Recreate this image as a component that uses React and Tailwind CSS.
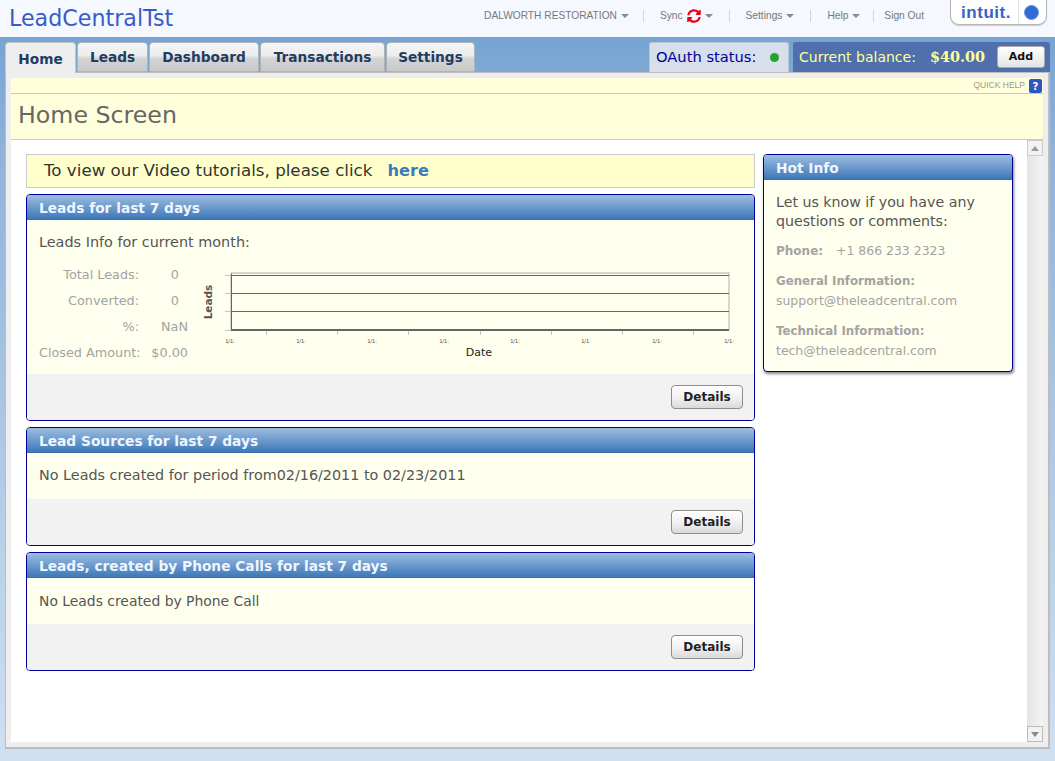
import { FaSyncAlt } from 'react-icons/fa';

const Caret = () => (
  <span className="ml-1 inline-block w-0 h-0 border-x-[4px] border-x-transparent border-t-[4px] border-t-[#8a8a8a] align-middle" />
);

const Tab = ({ label, active, className }) => (
  <div
    className={`${className} ${
      active
        ? 'h-[31px] -mb-px z-10 flex items-center justify-center pt-[2px] rounded-t-[4px] border border-b-0 border-[#c4c4c4] bg-[#eeeeee] text-[13.7px] font-bold text-[#1f3c63]'
        : 'h-[30px] flex items-center justify-center rounded-t-[4px] border border-[#a9b4bf] bg-[linear-gradient(#f5f5f5,#ececec_45%,#d4d4d4_55%,#c9c9c9)] text-[13.7px] font-bold text-[#1f3c63]'
    }`}
  >
    {label}
  </div>
);

const Card = ({ title, footer, children, className }) => (
  <div className={`border border-[#000099] rounded-[4px] overflow-hidden bg-[#ffffee] ${className || ''}`}>
    <div className="h-[25px] px-3 pt-[2px] flex items-center bg-[linear-gradient(#9dbde0,#3d78b9)] text-[#eef5ff] text-[13.75px] font-bold border-b border-[#3a6ea5]">
      {title}
    </div>
    {children}
    {footer && (
      <div className="h-[46px] bg-[#f2f2f2] flex items-center justify-end pr-[11px]">
        <button className="w-[72px] h-[24px] rounded-[4px] border border-[#8e8e8e] bg-[linear-gradient(#ffffff,#f0f0f0_55%,#d9d9d9)] text-[12px] font-bold text-[#222222]">
          Details
        </button>
      </div>
    )}
  </div>
);

const Chart = () => {
  const ticks = [230, 301, 372, 444, 515, 586, 657, 729];
  return (
    <svg width="540" height="100" viewBox="195 262 540 100" className="block">
      <text x="212" y="302" transform="rotate(-90 212 302)" textAnchor="middle" fontSize="10.5" fontWeight="bold" fill="#555" fontFamily="DejaVu Sans">Leads</text>
      <rect x="231" y="273" width="498" height="57" fill="none" stroke="#b0b0b0" />
      {[275, 293, 311].map((y) => (
        <line key={y} x1="231" x2="729" y1={y + 0.5} y2={y + 0.5} stroke="#666" />
      ))}
      <line x1="231.5" x2="231.5" y1="274" y2="330" stroke="#666" />
      <line x1="231" x2="729" y1="330" y2="330" stroke="#666" strokeWidth="2" />
      {[275, 293, 311, 330].map((y) => (
        <line key={y} x1="225" x2="231" y1={y + 0.5} y2={y + 0.5} stroke="#b7c7d8" />
      ))}
      {[266, 337, 408, 480, 551, 622, 693].map((x) => (
        <line key={x} x1={x + 0.5} x2={x + 0.5} y1="331" y2="335" stroke="#b7c7d8" />
      ))}
      {ticks.map((x) => (
        <text key={x} x={x} y="343" textAnchor="middle" fontSize="5" fill="#444" fontFamily="DejaVu Sans">1/1:</text>
      ))}
      <text x="479" y="356" textAnchor="middle" fontSize="11" fill="#222" fontFamily="DejaVu Sans">Date</text>
    </svg>
  );
};

const StatRow = ({ label, value, valueClass }) => (
  <div className="flex h-[26px] items-center text-[12.8px] text-[#a3a3a3] whitespace-nowrap">
    <div className="w-[100px] text-right">{label}</div>
    <div className={`w-[49px] text-right ${valueClass || ''}`}>{value}</div>
  </div>
);

export default function App() {
  return (
    <div className="h-screen overflow-hidden flex flex-col bg-[linear-gradient(#6f9fd0,#8fb3da_20%,#cfe0f1)] font-['DejaVu_Sans',sans-serif]">
      <div className="h-[37px] shrink-0 bg-[#f5f8ff] flex items-start justify-between">
        <div className="pl-[9px] pt-[3px] text-[22.2px] leading-[30px] text-[#3a5bc7]">LeadCentralTst</div>
        <div className="flex items-start font-['Liberation_Sans',sans-serif] text-[10.2px] text-[#777777]">
          <div className="flex items-center h-[12px] mt-[10px] pr-[14px]">DALWORTH RESTORATION<Caret /></div>
          <div className="flex items-center h-[12px] mt-[10px] pl-4 pr-[16px] border-l border-[#d5d5d5]">
            Sync <FaSyncAlt className="ml-1 text-[#ee0011] text-[14px]" /><Caret />
          </div>
          <div className="flex items-center h-[12px] mt-[10px] pl-4 pr-[16px] border-l border-[#d5d5d5]">Settings<Caret /></div>
          <div className="flex items-center h-[12px] mt-[10px] pl-4 pr-[13px] border-l border-[#d5d5d5]">Help<Caret /></div>
          <div className="flex items-center h-[12px] mt-[10px] pl-[10px] pr-[26px] border-l border-[#d5d5d5]">Sign Out</div>
          <div className="mr-[8px] w-[97px] h-[26px] -mt-px flex rounded-b-[9px] border border-[#b5b5b5] bg-white shadow-[0_1px_1px_#cccccc]">
            <div className="w-[67px] pt-[1px] pl-[3px] flex items-center justify-center font-['Liberation_Sans',sans-serif] text-[17px] font-bold tracking-[0.5px] text-[#3763c4]">intuit.</div>
            <div className="flex-1 border-l border-[#e2e2e2] flex items-center justify-center pr-[2px]">
              <span className="w-[15px] h-[15px] rounded-full bg-[#2f6ad6] border border-[#6d94dc]" />
            </div>
          </div>
        </div>
      </div>

      <div className="h-[35px] shrink-0 px-[5px] pt-[5px] flex justify-between items-start">
        <div className="flex gap-px">
          <Tab label="Home" active className="w-[71px]" />
          <Tab label="Leads" className="w-[71px]" />
          <Tab label="Dashboard" className="w-[110px]" />
          <Tab label="Transactions" className="w-[125px]" />
          <Tab label="Settings" className="w-[89px]" />
        </div>
        <div className="flex gap-1">
          <div className="w-[140px] h-[30px] px-[6px] flex items-center justify-between pr-[9px] rounded-t-[3px] border border-b-0 border-[#b9c6d6] bg-[#d6dfea] text-[14.7px] text-[#000099]">
            OAuth status:
            <span className="w-[9px] h-[9px] rounded-full bg-[#21a52a]" />
          </div>
          <div className="w-[257px] h-[30px] pl-[6px] pr-[5px] flex items-center rounded-t-[3px] bg-[#5070ad] text-[14px] text-[#ffff99]">
            <span>Current balance:</span>
            <span className="ml-[14px] font-['DejaVu_Serif',serif] font-bold text-[14.4px]">$40.00</span>
            <button className="ml-auto w-[48px] h-[22px] rounded-[3px] border border-[#aaaaaa] bg-[linear-gradient(#ffffff,#e4e4e4)] text-[11px] font-bold text-[#111111]">Add</button>
          </div>
        </div>
      </div>

      <div className="mx-[5px] h-[677px] shrink-0 border border-[#bdbdbd] border-r-2 border-b-2 bg-[#eeeeee] pt-[5px] pl-[5px] pr-[5px] pb-[5px] flex flex-col">
        <div className="h-[16px] shrink-0 bg-[#ffffdc] border-b border-[#c8c8d0] flex items-center justify-end pr-[1px]">
          <span className="font-['Liberation_Sans',sans-serif] text-[8.5px] text-[#999999] mr-[4px]">QUICK HELP</span>
          <span className="w-[13px] h-[14px] mt-[1px] flex items-center justify-center rounded-[2px] bg-[#2f55c4] text-white text-[10px] font-bold">?</span>
        </div>
        <div className="h-[46px] shrink-0 bg-[#ffffdc] border-b border-[#c8c8d0] pl-[7px] pb-[1px] flex items-center text-[23.7px] text-[#666666]">Home Screen</div>

        <div className="flex-1 min-h-0 flex bg-white">
          <div className="flex-1 min-w-0 pl-[15px] pt-[14px] flex gap-2 items-start">
            <div className="w-[729px] flex flex-col gap-[6px]">
              <div className="h-[34px] flex items-center pl-[17px] border border-[#cccccc] bg-[#ffffcc] text-[16.7px] text-[#333333]">
                To view our Video tutorials, please click
                <span className="ml-[15px] font-bold text-[#3a7abf] text-[16.2px]">here</span>
              </div>
              <Card title="Leads for last 7 days" footer>
                <div className="h-[154px] px-3 pt-[13px] text-[14.4px] text-[#555555]">
                  <div className="leading-[18px]">Leads Info for current month:</div>
                  <div className="flex mt-[2px]">
                    <div className="pt-[9px]">
                      <StatRow label="Total Leads:" value="0" valueClass="pr-[9px]" />
                      <StatRow label="Converted:" value="0" valueClass="pr-[9px]" />
                      <StatRow label="%:" value="NaN" />
                      <StatRow label="Closed Amount:" value="$0.00" />
                    </div>
                    <div className="ml-[7px] mt-[9px]"><Chart /></div>
                  </div>
                </div>
              </Card>
              <Card title="Lead Sources for last 7 days" footer>
                <div className="h-[46px] px-3 flex items-center text-[14.35px] text-[#555555]">
                  No Leads created for period from02/16/2011 to 02/23/2011
                </div>
              </Card>
              <Card title="Leads, created by Phone Calls for last 7 days" footer>
                <div className="h-[46px] px-3 flex items-center text-[13.9px] text-[#555555]">
                  No Leads created by Phone Call
                </div>
              </Card>
            </div>

            <Card title="Hot Info" className="w-[250px] shadow-[1px_2px_3px_#888888]">
              <div className="h-[191px] px-3 pt-[13px] text-[12.45px] text-[#a3a3a3]">
                <div className="text-[14.2px] leading-[19px] text-[#555555]">Let us know if you have any questions or comments:</div>
                <div className="mt-[11px] leading-[18px]"><b className="mr-[13px] text-[12px]">Phone:</b>+1 866 233 2323</div>
                <div className="mt-[11px] leading-[20px] font-bold text-[11.8px]">General Information:</div>
                <div className="leading-[20px]">support@theleadcentral.com</div>
                <div className="mt-[10px] leading-[20px] font-bold text-[11.8px]">Technical Information:</div>
                <div className="leading-[20px]">tech@theleadcentral.com</div>
              </div>
            </Card>
          </div>

          <div className="w-[16px] shrink-0 flex flex-col justify-between bg-[linear-gradient(90deg,#e4e4e4,#f4f4f4)]">
            <div className="h-[16px] flex items-center justify-center border border-[#cccccc] bg-[#f2f2f2]">
              <span className="w-0 h-0 border-x-[4px] border-x-transparent border-b-[5px] border-b-[#999999]" />
            </div>
            <div className="h-[16px] flex items-center justify-center border border-[#bbbbbb] bg-[#f2f2f2]">
              <span className="w-0 h-0 border-x-[4px] border-x-transparent border-t-[5px] border-t-[#888888]" />
            </div>
          </div>
        </div>
      </div>
    </div>
  );
}
